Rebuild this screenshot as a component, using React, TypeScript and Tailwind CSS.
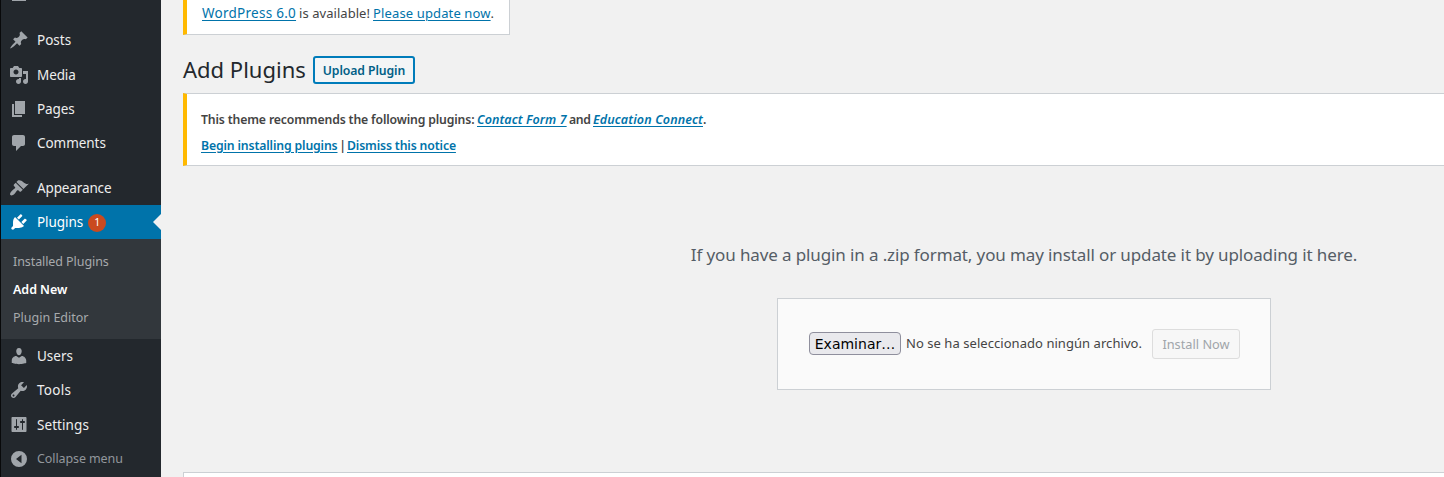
import type { ReactNode } from "react";

const icons = {
  posts:
    "M10.44 3.02l1.82-1.82 6.36 6.35-1.83 1.82c-1.05-.68-2.48-.57-3.41.36l-.75.75c-.92.93-1.04 2.35-.35 3.41l-1.83 1.82-2.41-2.41-2.8 2.79c-.42.42-3.38 2.71-3.8 2.29s1.86-3.39 2.28-3.81l2.79-2.79L4.1 9.36l1.83-1.82c1.05.69 2.48.57 3.4-.36l.75-.75c.93-.92 1.05-2.35.36-3.41z",
  media:
    "M13 11V4c0-.55-.45-1-1-1h-1.67L9 1H5L3.67 3H2c-.55 0-1 .45-1 1v7c0 .55.45 1 1 1h10c.55 0 1-.45 1-1zM7 4.5c1.38 0 2.5 1.12 2.5 2.5S8.38 9.5 7 9.5 4.5 8.38 4.5 7 5.62 4.5 7 4.5zM14 6h5v10.5c0 1.38-1.12 2.5-2.5 2.5S14 17.88 14 16.5s1.12-2.5 2.5-2.5c.17 0 .34.02.5.05V9h-3V6zm-4 8.05V13h2v3.5c0 1.38-1.12 2.5-2.5 2.5S7 17.88 7 16.5 8.12 14 9.5 14c.17 0 .34.02.5.05z",
  pages: "M6 15V2h10v13H6zm-1 1h8v2H3V5h2v11z",
  comments: "M5 2h9c1.1 0 2 .9 2 2v7c0 1.1-.9 2-2 2h-2l-5 5v-5H5c-1.1 0-2-.9-2-2V4c0-1.1.9-2 2-2z",
  appearance:
    "M14.48 11.06L7.41 3.99l1.5-1.5c.5-.56 2.3-.47 3.51.32 1.21.8 1.43 1.28 2.91 2.1 1.18.64 2.45 1.26 4.45.85zm-.71.71L6.7 4.7 4.93 6.47c-.39.39-.39 1.02 0 1.41l1.06 1.06c.39.39.39 1.03 0 1.42-.6.6-1.43 1.11-2.21 1.69-.35.26-.7.53-1.01.84C1.43 14.23.4 16.08 1.4 17.07c.99 1 2.84-.03 4.18-1.36.31-.31.58-.66.85-1.02.57-.78 1.08-1.61 1.69-2.21.39-.39 1.02-.39 1.41 0l1.06 1.06c.39.39 1.02.39 1.41 0z",
  plugins:
    "M13.11 4.36L9.87 7.6 8 5.73l3.24-3.24c.35-.34 1.05-.2 1.56.32.52.51.66 1.21.31 1.55zm-8 1.77l.91-1.12 9.01 9.01-1.19.84c-.71.71-2.63 1.16-3.82 1.16H6.14L4.9 17.26c-.59.59-1.54.59-2.12 0-.59-.58-.59-1.53 0-2.12l1.24-1.24v-3.88c0-1.13.4-3.19 1.09-3.89zm7.26 3.97l3.24-3.24c.34-.35 1.04-.21 1.55.31.52.51.66 1.21.31 1.55l-3.24 3.25z",
  users:
    "M10 9.25c-2.27 0-2.73-3.44-2.73-3.44C7 4.02 7.82 2 9.97 2c2.16 0 2.98 2.02 2.71 3.81 0 0-.41 3.44-2.68 3.44zm0 2.57L12.72 10c2.39 0 4.52 2.33 4.52 4.53v2.49s-3.65 1.13-7.24 1.13c-3.65 0-7.24-1.13-7.24-1.13v-2.49c0-2.25 1.94-4.48 4.47-4.48z",
  tools:
    "M16.68 9.77c-1.34 1.34-3.3 1.67-4.95.99l-5.41 6.52c-.99.99-2.59.99-3.58 0s-.99-2.59 0-3.57l6.52-5.42c-.68-1.65-.35-3.61.99-4.95 1.28-1.28 3.12-1.62 4.72-1.06l-2.89 2.89 2.82 2.82 2.86-2.87c.53 1.58.18 3.39-1.08 4.65zM3.81 16.21c.4.39 1.04.39 1.43 0 .4-.4.4-1.04 0-1.43-.39-.4-1.03-.4-1.43 0-.39.39-.39 1.03 0 1.43z",
  settings:
    "M17.5 16V3c0-.55-.45-1-1-1h-13c-.55 0-1 .45-1 1v13c0 .55.45 1 1 1h13c.55 0 1-.45 1-1zM8 11h1c.55 0 1 .45 1 1s-.45 1-1 1H8v1.5c0 .28-.22.5-.5.5s-.5-.22-.5-.5V13H6c-.55 0-1-.45-1-1s.45-1 1-1h1V4.5c0-.28.22-.5.5-.5s.5.22.5.5V11zm5-3h-1c-.55 0-1-.45-1-1s.45-1 1-1h1V4.5c0-.28.22-.5.5-.5s.5.22.5.5V6h1c.55 0 1 .45 1 1s-.45 1-1 1h-1v6.500c0 .28-.22.5-.5.5s-.5-.22-.5-.5V8z",
  collapse: "M10 2a8 8 0 1 0 0 16a8 8 0 1 0 0-16zM12.500 5.8v8.4L7 10z",
};

function Icon({ name }: { name: keyof typeof icons }) {
  return (
    <svg viewBox="0 0 20 20" className="mr-2 ml-2 size-5 shrink-0 fill-current" fillRule="evenodd">
      <path d={icons[name]} />
    </svg>
  );
}

function Item({ icon, tracking = "", children }: { icon: keyof typeof icons; tracking?: string; children: ReactNode }) {
  return (
    <a className="flex h-[34px] shrink-0 items-center text-[#a0a5aa]">
      <Icon name={icon} />
      <span className={`text-[13.5px] text-[#eee] ${tracking}`}>{children}</span>
    </a>
  );
}

function Link({ className = "", children }: { className?: string; children: ReactNode }) {
  return (
    <a className={`text-[#0073aa] underline decoration-1 underline-offset-2 ${className}`}>{children}</a>
  );
}

function Sidebar() {
  return (
    <nav className="flex w-[161px] shrink-0 flex-col border-l border-[#08090a] bg-[#23282d]">
      <div className="h-[23px] shrink-0">
        <div className="ml-[11px] h-px w-[14px] bg-[#a0a5aa]" />
      </div>
      <Item icon="posts">Posts</Item>
      <div className="h-px shrink-0" />
      <Item icon="media" tracking="tracking-[-0.1px]">Media</Item>
      <Item icon="pages" tracking="tracking-[-0.1px]">Pages</Item>
      <Item icon="comments" tracking="tracking-[-0.05px]">Comments</Item>
      <div className="h-[11px] shrink-0" />
      <Item icon="appearance" tracking="tracking-[-0.13px]">Appearance</Item>
      <a className="flex h-[34px] shrink-0 items-center bg-[#0073aa] text-white">
        <Icon name="plugins" />
        <span className="text-[13.5px] tracking-[-0.05px]">Plugins</span>
        <span className="mt-0.5 ml-[5px] flex size-[18px] items-center justify-center rounded-full bg-[#ca4a1f] text-[10.5px]">
          1
        </span>
        <svg viewBox="0 0 8 16" className="ml-auto h-4 w-2 fill-[#f1f1f1]">
          <path d="M8 0v16L0 8z" />
        </svg>
      </a>
      <div className="flex h-[100px] shrink-0 flex-col bg-[#32373c] pt-[9px] pl-3 text-[12.5px] text-[#a7aaad]">
        <a className="flex h-7 items-center tracking-[-0.08px]">Installed Plugins</a>
        <a className="flex h-7 items-center font-semibold tracking-[-0.05px] text-white">Add New</a>
        <a className="flex h-7 items-center">Plugin Editor</a>
      </div>
      <Item icon="users">Users</Item>
      <Item icon="tools" tracking="tracking-[0.3px]">Tools</Item>
      <div className="h-px shrink-0" />
      <Item icon="settings" tracking="tracking-[0.07px]">Settings</Item>
      <a className="flex h-[34px] shrink-0 items-center text-[12.5px] tracking-[-0.1px] text-[#a0a5aa]">
        <Icon name="collapse" />
        <span className="text-[#92979c]">Collapse menu</span>
      </a>
    </nav>
  );
}

export default function App() {
  return (
    <div className="flex h-[477px] w-[1444px] overflow-hidden bg-[#f1f1f1] font-['Noto_Sans',sans-serif] text-[13px] text-[#444] [&_*]:whitespace-nowrap">
      <Sidebar />
      <main className="flex min-w-0 flex-1 flex-col pl-[22px]">
        <div className="flex h-[35px] w-[327px] shrink-0 border-r border-b border-l-4 border-[#ccd0d4] border-l-[#ffb900] bg-white pl-[15px]">
          <p className="mt-[3px] flex h-5 items-baseline">
            <Link className="text-[13.5px] tracking-[0.26px]">WordPress 6.0</Link>
            <span className="ml-[3px] tracking-[0.05px]">is available!</span>
            <Link className="ml-[3px] tracking-[0.13px]">Please update now</Link>.
          </p>
        </div>
        <div className="mt-[21px] flex h-7 shrink-0 items-center">
          <h1 className="w-[130px] pb-px text-[22px] text-[#23282d]">Add Plugins</h1>
          <button className="h-7 w-[102px] rounded-[3px] border-2 border-[#007cba] bg-[#f3f5f6] pt-0.5 text-[12.25px] font-semibold tracking-[-0.09px] text-[#016087]">
            Upload Plugin
          </button>
        </div>
        <section className="mt-[9px] flex h-[73px] shrink-0 flex-col border-y border-l-4 border-[#ccd0d4] border-l-[#ffb900] bg-white pt-[13px] pl-[14px] text-[12.25px] font-semibold">
          <p className="flex h-[26px] items-center">
            <span className="w-[276px] tracking-[-0.15px]">This theme recommends the following plugins:</span>
            <Link className="w-[90px] text-[12.5px] tracking-[0.1px] italic">Contact Form 7</Link>
            <span className="ml-[2px] w-6 tracking-[-0.4px]">and</span>
            <Link className="text-[12.5px] tracking-[0.13px] italic">Education Connect</Link>.
          </p>
          <p className="flex h-[26px] items-center tracking-[-0.14px]">
            <Link className="w-[137px]">Begin installing plugins</Link>
            <span className="w-[9px] text-center">|</span>
            <Link>Dismiss this notice</Link>
          </p>
        </section>
        <div className="mt-[75px] flex w-[1682px] shrink-0 flex-col items-center">
          <p className="flex h-7 items-center text-[17px] tracking-[-0.12px] text-[#555d66]">
            If you have a plugin in a .zip format, you may install or update it by uploading it here.
          </p>
          <form className="mt-[29px] flex h-[92px] w-[494px] items-center border border-[#ccd0d4] bg-[#fafafa] pl-[31px]">
            <button
              type="button"
              className="mb-px h-[23px] w-[92px] rounded-[4px] border border-[#8f8f9d] bg-[#e9e9ed] font-['DejaVu_Sans',sans-serif] text-[14px] leading-5 text-black"
            >
              Examinar…
            </button>
            <span className="ml-[5px] w-[246px] tracking-[0.05px]">No se ha seleccionado ningún archivo.</span>
            <button
              type="button"
              disabled
              className="h-[30px] w-[88px] rounded-[3px] border border-[#ddd] bg-[#f7f7f7] pt-0.5 text-[12.75px] text-[#a0a5aa]"
            >
              Install Now
            </button>
          </form>
        </div>
        <div className="mt-[82px] h-10 shrink-0 border-t border-l border-[#ccd0d4] bg-white" />
      </main>
    </div>
  );
}
